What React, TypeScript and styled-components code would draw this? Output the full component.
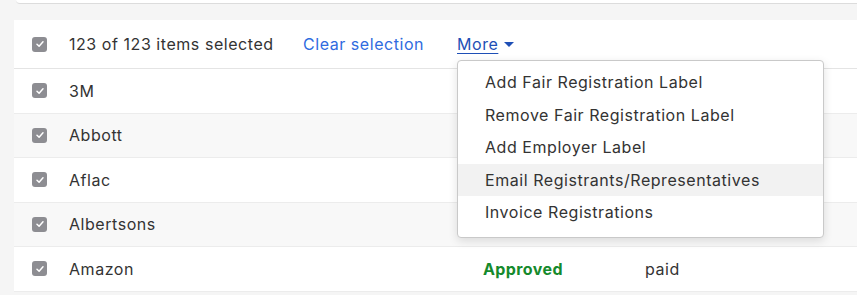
import React from "react";
import styled, { createGlobalStyle } from "styled-components";

const Global = createGlobalStyle`
  html, body { margin: 0; padding: 0; background: #ffffff; }
  body { font-family: Inter, "Noto Sans", "Liberation Sans", sans-serif; color: #333; letter-spacing: 0.55px; }
`;

const Page = styled.div`
  width: 857px;
  height: 295px;
  background: #f5f5f5;
  padding-left: 14px;
  box-sizing: border-box;
  display: flex;
  flex-direction: column;
  overflow: hidden;
`;

const PrevCardEdge = styled.div`
  height: 3px;
  margin-left: 2px;
  background: #ffffff;
  border-bottom: 1px solid #dcdcdc;
  border-bottom-left-radius: 4px;
`;

const Spacer = styled.div`
  height: 16px;
`;

const Table = styled.div`
  background: #fff;
  display: flex;
  flex-direction: column;
`;

const HeaderRow = styled.div`
  height: 48px;
  display: flex;
  align-items: center;
  border-bottom: 1px solid #e4e4e4;
  position: relative;
  font-size: 16px;
`;

const Row = styled.div<{ $striped?: boolean }>`
  height: 43.5px;
  display: flex;
  align-items: center;
  border-bottom: 1px solid #ececec;
  background: ${(p) => (p.$striped ? "#f8f8f8" : "#fff")};
  font-size: 16px;
`;

const CheckCell = styled.div`
  width: 55px;
  padding-left: 18px;
  box-sizing: border-box;
  display: flex;
  align-items: center;
`;

const Box = styled.span`
  width: 15px;
  height: 15px;
  border-radius: 3px;
  background: #8d8d92;
  display: inline-flex;
  align-items: center;
  justify-content: center;
`;

const NameCell = styled.div`
  width: 414px;
  color: #333;
`;

const StatusCell = styled.div`
  width: 162px;
  color: #158a2c;
  font-weight: 700;
  letter-spacing: 0.4px;
`;

const PayCell = styled.div`
  color: #333;
`;

const SelectedText = styled.span`
  color: #333;
  width: 234px;
`;

const ClearLink = styled.span`
  color: #2f6be0;
  width: 154px;
  cursor: pointer;
`;

const MoreWrap = styled.div`
  position: relative;
  display: flex;
  align-items: center;
`;

const MoreLink = styled.span`
  color: #1e4fb6;
  text-decoration: underline;
  text-underline-offset: 3px;
  text-decoration-thickness: 1px;
  cursor: pointer;
`;

const Caret = styled.span`
  margin-left: 6px;
  width: 0;
  height: 0;
  border-left: 5px solid transparent;
  border-right: 5px solid transparent;
  border-top: 5px solid #1e4fb6;
`;

const Menu = styled.div`
  position: absolute;
  left: 0;
  top: 26px;
  width: 367px;
  box-sizing: border-box;
  background: #fff;
  border: 1px solid #c9c9c9;
  border-radius: 4px;
  box-shadow: 0 3px 10px rgba(0, 0, 0, 0.12);
  padding: 5px 0 8px;
  z-index: 10;
`;

const MenuItem = styled.div<{ $active?: boolean }>`
  height: 32.5px;
  display: flex;
  align-items: center;
  padding-left: 27px;
  color: #333;
  font-size: 16px;
  background: ${(p) => (p.$active ? "#f2f2f2" : "transparent")};
`;

const Check = () => (
  <Box>
    <svg width="10" height="10" viewBox="0 0 10 10">
      <path d="M2 5.2 L4.1 7.2 L8 2.8" stroke="#fff" strokeWidth="1.5" fill="none" strokeLinecap="round" strokeLinejoin="round" />
    </svg>
  </Box>
);

const rows: { name: string; status?: string; pay?: string }[] = [
  { name: "3M" },
  { name: "Abbott" },
  { name: "Aflac" },
  { name: "Albertsons" },
  { name: "Amazon", status: "Approved", pay: "paid" },
];

const menuItems = [
  "Add Fair Registration Label",
  "Remove Fair Registration Label",
  "Add Employer Label",
  "Email Registrants/Representatives",
  "Invoice Registrations",
];

export default function App() {
  return (
    <>
      <Global />
      <Page>
        <PrevCardEdge />
        <Spacer />
        <Table>
          <HeaderRow>
            <CheckCell>
              <Check />
            </CheckCell>
            <SelectedText>123 of 123 items selected</SelectedText>
            <ClearLink>Clear selection</ClearLink>
            <MoreWrap>
              <MoreLink>More</MoreLink>
              <Caret />
              <Menu>
                {menuItems.map((m, i) => (
                  <MenuItem key={m} $active={i === 3}>
                    {m}
                  </MenuItem>
                ))}
              </Menu>
            </MoreWrap>
          </HeaderRow>
          {rows.map((r, i) => (
            <Row key={r.name} $striped={i % 2 === 1}>
              <CheckCell>
                <Check />
              </CheckCell>
              <NameCell>{r.name}</NameCell>
              <StatusCell>{r.status}</StatusCell>
              <PayCell>{r.pay}</PayCell>
            </Row>
          ))}
        </Table>
      </Page>
    </>
  );
}
